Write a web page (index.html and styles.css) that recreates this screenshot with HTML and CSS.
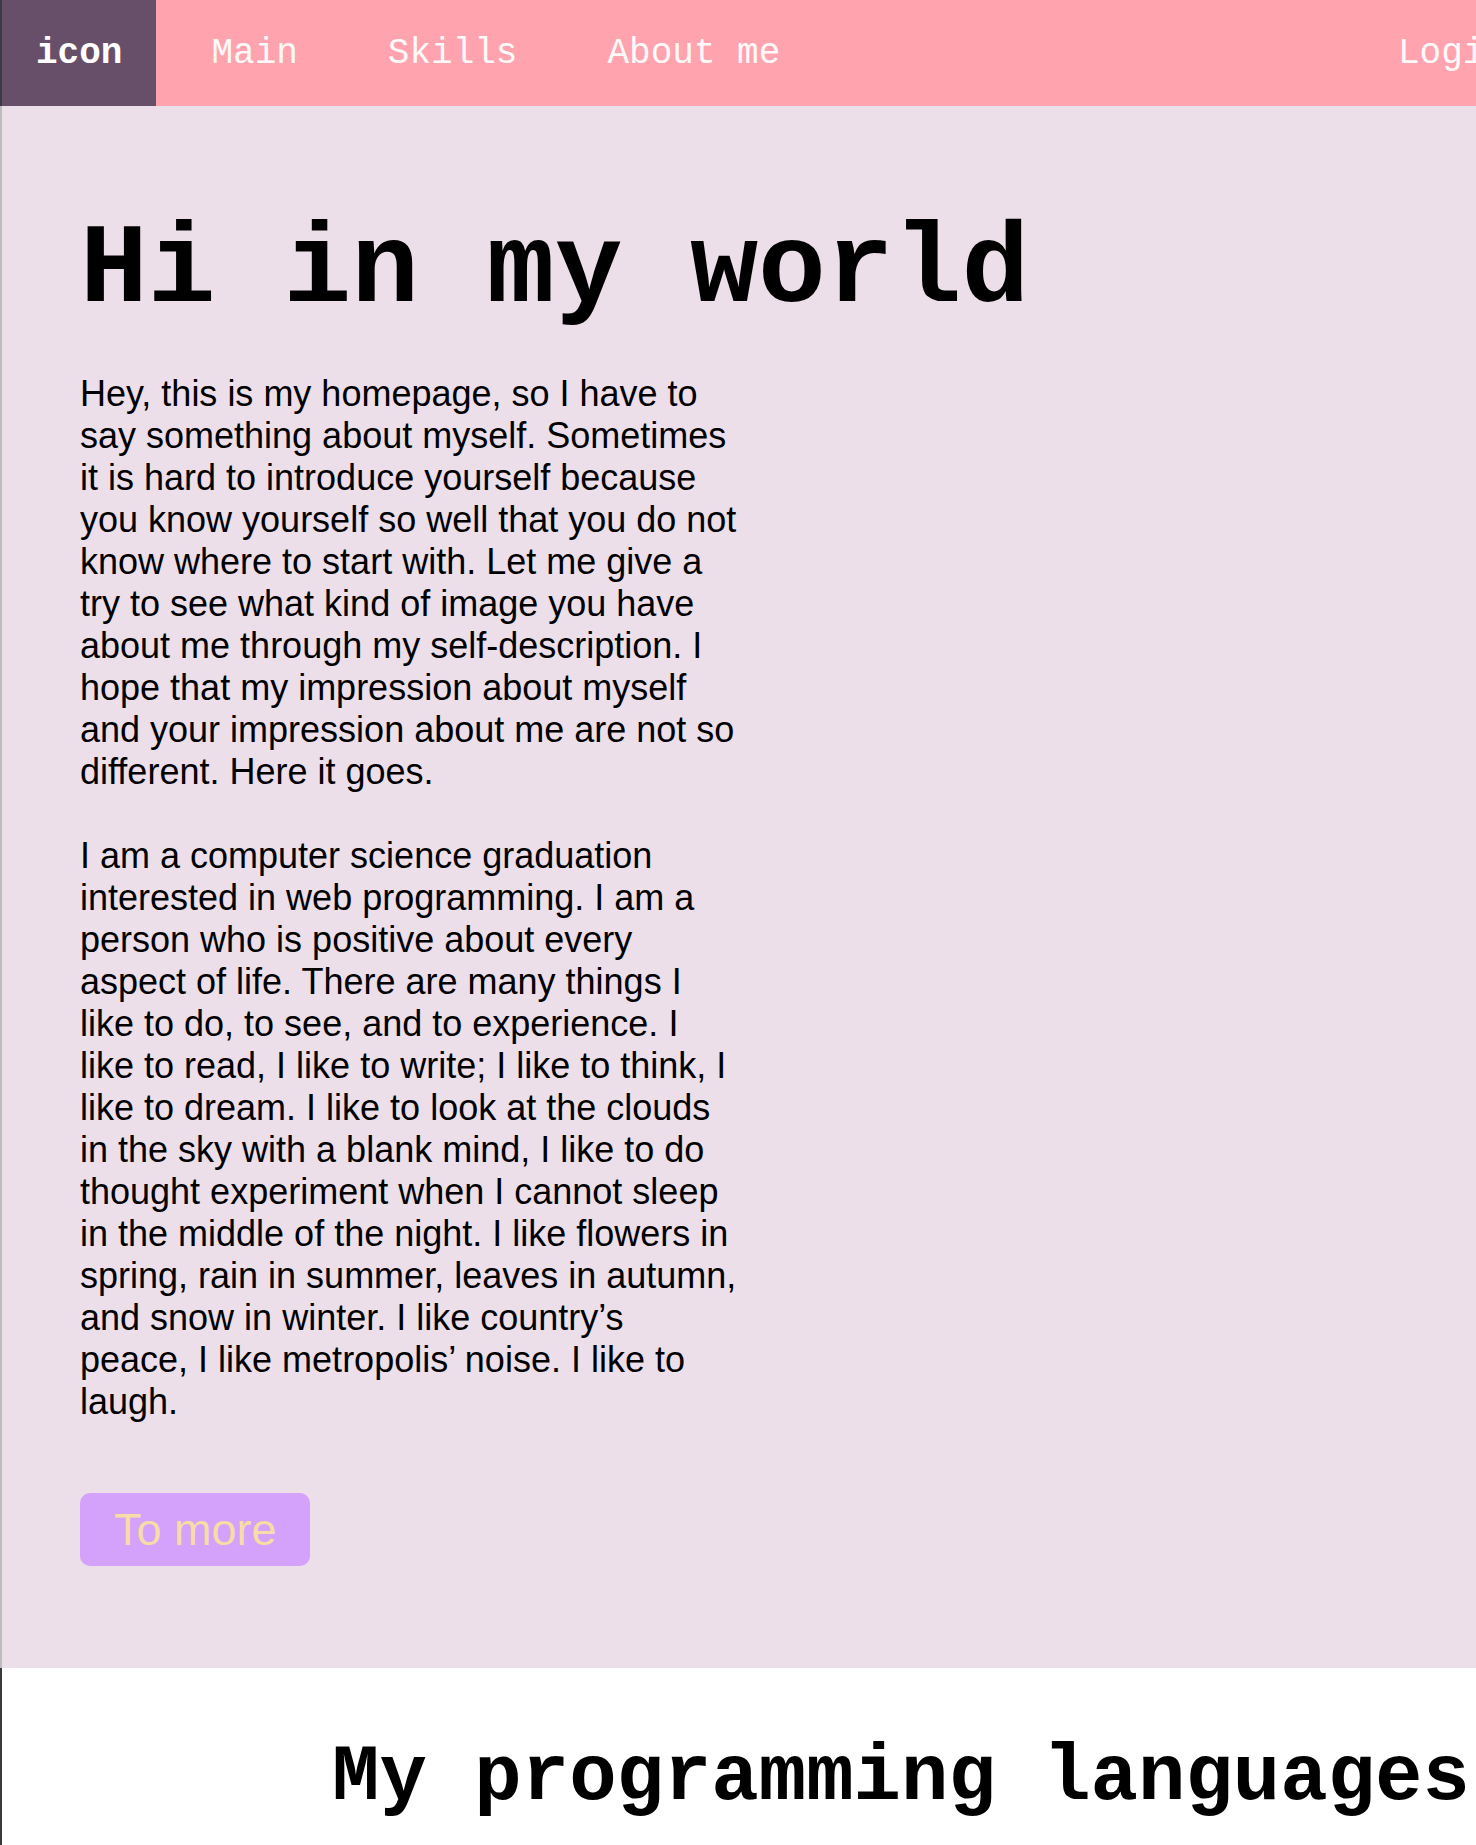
FILE: index.html
```html
<!DOCTYPE html>
<html lang="en">
<head>
<meta charset="utf-8">
<title>Hi in my world</title>
<link rel="stylesheet" href="styles.css">
</head>
<body>
<div class="page">
  <header class="nav">
    <a class="brand" href="#">icon</a>
    <a class="nav-link first" href="#">Main</a>
    <a class="nav-link" href="#">Skills</a>
    <a class="nav-link" href="#">About me</a>
    <a class="nav-link login" href="#">Login</a>
  </header>
  <section class="hero">
    <h1 class="hero-title">Hi in my world</h1>
    <p class="hero-text">Hey, this is my homepage, so I have to say something about myself. Sometimes it is hard to introduce yourself because you know yourself so well that you do not know where to start with. Let me give a try to see what kind of image you have about me through my self-description. I hope that my impression about myself and your impression about me are not so different. Here it goes.</p>
    <p class="hero-text last">I am a computer science graduation interested in web programming. I am a person who is positive about every aspect of life. There are many things I like to do, to see, and to experience. I like to read, I like to write; I like to think, I like to dream. I like to look at the clouds in the sky with a blank mind, I like to do thought experiment when I cannot sleep in the middle of the night. I like flowers in spring, rain in summer, leaves in autumn, and snow in winter. I like country’s peace, I like metropolis’ noise. I like to laugh.</p>
    <a class="btn" href="#">To more</a>
  </section>
  <section class="langs">
    <h2 class="langs-title">My programming languages</h2>
  </section>
</div>
</body>
</html>
```

FILE: styles.css
```css
html {
  overflow: hidden;
}

body {
  margin: 0;
  background: #ffffff;
}

.page {
  width: 1800px;
}

.nav {
  display: flex;
  align-items: center;
  height: 106px;
  background: #ffa3af;
  border-left: 2px solid #3b3b48;
  font-family: "Liberation Mono", "Courier New", monospace;
  font-size: 36px;
  line-height: normal;
}

.brand {
  align-self: stretch;
  display: flex;
  align-items: center;
  padding: 0 34px;
  background: #684f69;
  color: #ffffff;
  font-weight: bold;
  text-decoration: none;
}

.nav-link {
  padding: 0 45px;
  color: #fffafa;
  text-decoration: none;
}

.nav-link.first {
  margin-left: 10px;
}

.nav-link.login {
  margin-left: auto;
  margin-right: 249px;
}

.hero {
  background: #ecdfe9;
  border-left: 2px solid #bdbdbd;
  padding: 101px 0 102px 78px;
}

.hero-title {
  margin: 0 0 38px;
  font-family: "Liberation Mono", "Courier New", monospace;
  font-weight: bold;
  font-size: 113px;
  line-height: normal;
  color: #000000;
}

.hero-text {
  width: 660px;
  margin: 0 0 42px;
  font-family: "Liberation Sans", Arial, sans-serif;
  font-size: 36px;
  line-height: 42px;
  color: #000000;
}

.hero-text.last {
  margin-bottom: 70px;
}

.btn {
  display: inline-block;
  padding: 11px 33px 11px 34px;
  background: #d4a1fb;
  border-radius: 10px;
  color: #f8dca6;
  font-family: "Liberation Sans", Arial, sans-serif;
  font-size: 45px;
  line-height: 51px;
  text-decoration: none;
}

.langs {
  background: #ffffff;
  border-left: 2px solid #3a3a3a;
  padding-top: 65px;
  height: 400px;
}

.langs-title {
  margin: 0;
  text-align: center;
  font-family: "Liberation Mono", "Courier New", monospace;
  font-weight: bold;
  font-size: 79px;
  line-height: normal;
  color: #000000;
}
```
